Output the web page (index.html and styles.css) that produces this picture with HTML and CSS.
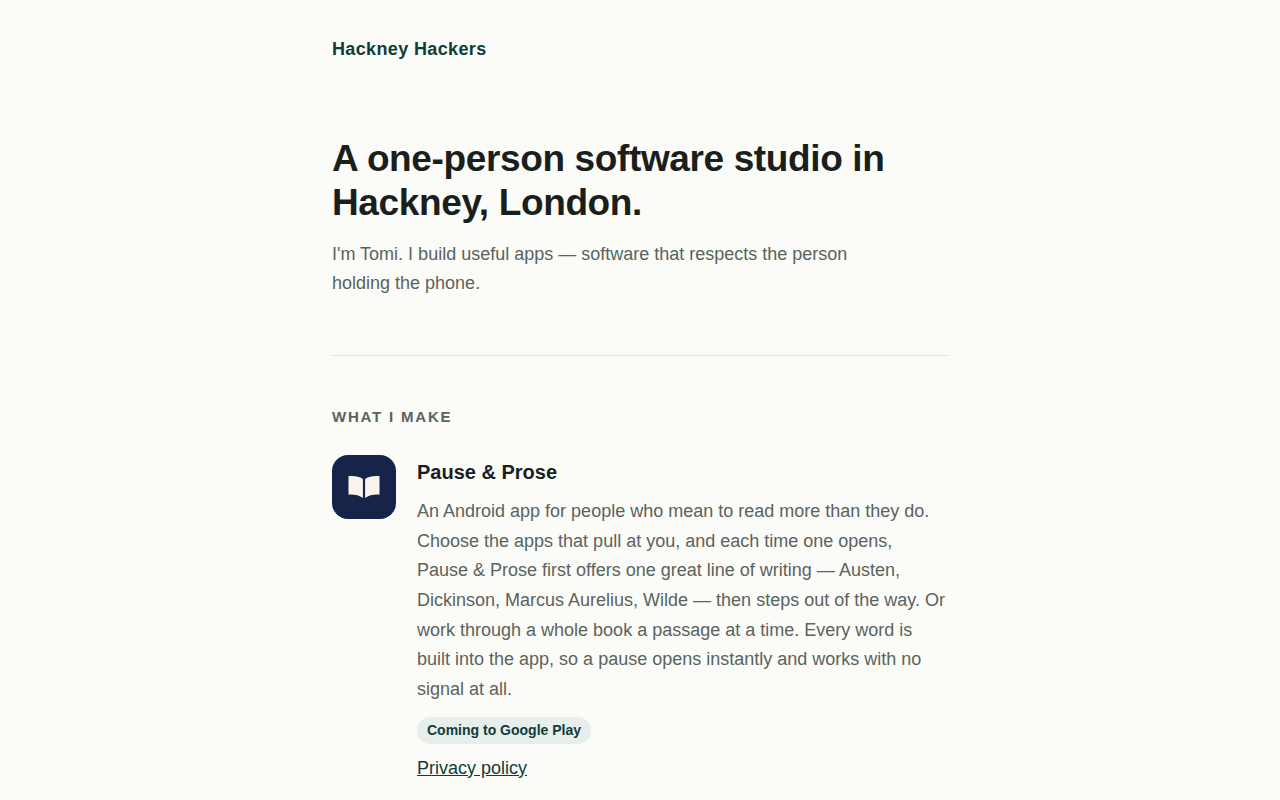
FILE: index.html
```
<!DOCTYPE html>
<html lang="en">
<head>
  <meta charset="UTF-8" />
  <meta name="viewport" content="width=device-width, initial-scale=1.0"/>
  <title>Hackney Hackers</title>
  <link rel="stylesheet" href="styles.css">
</head>
<body>

  <div class="wrap">
    <header class="site-header">Hackney Hackers</header>

    <main>
      <section class="hero">
        <h1>A one-person software studio in Hackney, London.</h1>
        <p>I'm Tomi. I build useful apps — software that respects the person holding the phone.</p>
      </section>

      <section class="work">
        <h2>What I make</h2>
        <article class="app">
          <svg class="app-icon" viewBox="0 0 64 64" aria-hidden="true">
            <rect width="64" height="64" rx="16" fill="#16244a"/>
            <path d="M16.500 21.300C22 20.700 27 21.500 30.900 24V43C27 40.200 22 39.200 16.500 39.700Z" fill="#f9f3ec"/>
            <path d="M47.500 21.300C42 20.700 37 21.500 33.100 24V43C37 40.200 42 39.200 47.500 39.700Z" fill="#f9f3ec"/>
          </svg>
          <div class="app-body">
            <h3>Pause &amp; Prose</h3>
            <p>An Android app for people who mean to read more than they do. Choose the apps that pull at you, and each time one opens, Pause &amp; Prose first offers one great line of writing — Austen, Dickinson, Marcus Aurelius, Wilde — then steps out of the way. Or work through a whole book a passage at a time. Every word is built into the app, so a pause opens instantly and works with no signal at all.</p>
            <span class="status">Coming to Google Play</span>
            <div class="links"><a href="#privacy">Privacy policy</a></div>
          </div>
        </article>
      </section>
    </main>
  </div>

</body>
</html>
```
FILE: styles.css
```
:root {
  --bg: #fbfbf7;
  --ink: #1a1f1d;
  --muted: #5a635e;
  --accent: #0f3d3a;
  --line: #dfe4df;
  --tint: #e7eeeb;
}

* {
  box-sizing: border-box;
}

body {
  margin: 0;
  background: var(--bg);
  color: var(--ink);
  font-family: "Liberation Sans", Arial, sans-serif;
  font-size: 18px;
  line-height: 1.65;
}

.wrap {
  max-width: 664px;
  margin: 0 auto;
  padding: 0 24px;
}

.site-header {
  padding-top: 34px;
  color: var(--accent);
  font-weight: 700;
  line-height: 30px;
  letter-spacing: 0.02em;
}

.hero {
  padding: 73px 0 57px;
  border-bottom: 1px solid var(--line);
}

.hero h1 {
  margin: 0 0 15px;
  font-size: 37px;
  line-height: 44px;
  letter-spacing: -0.01em;
}

.hero p {
  max-width: 540px;
  margin: 0;
  color: var(--muted);
  line-height: 29px;
}

.work {
  padding: 48px 0;
}

.work h2 {
  margin: 0 0 26px;
  color: var(--muted);
  font-size: 15px;
  line-height: 25px;
  letter-spacing: 0.12em;
  text-transform: uppercase;
}

.app {
  display: flex;
  gap: 21px;
}

.app-icon {
  flex: none;
  width: 64px;
  height: 64px;
}

.app-body h3 {
  margin: 0 0 8px;
  font-size: 20px;
  line-height: 34px;
}

.app-body p {
  margin: 0 0 12px;
  color: var(--muted);
}

.status {
  display: block;
  width: fit-content;
  padding: 3px 10px;
  border-radius: 99px;
  background: var(--tint);
  color: var(--accent);
  font-size: 14px;
  font-weight: 700;
  line-height: 21px;
}

.links {
  margin-top: 10px;
}

.links a {
  color: var(--accent);
}
```
